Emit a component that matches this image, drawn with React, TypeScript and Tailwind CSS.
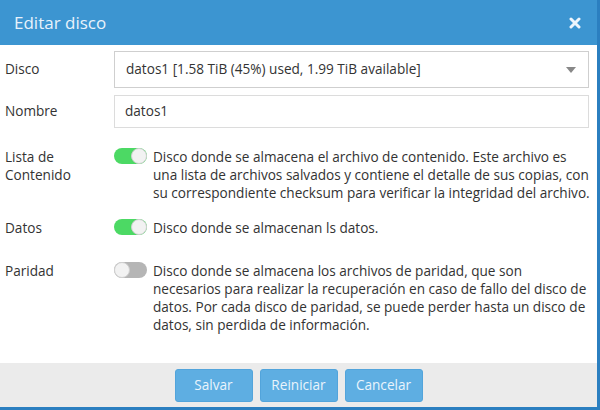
import React from "react";

function Toggle({ on }: { on: boolean }) {
  return (
    <div
      className={
        on
          ? "relative w-[33px] h-[16px] rounded-full bg-[#4cd964] shrink-0"
          : "relative w-[33px] h-[16px] rounded-full bg-[#b5b5b5] shrink-0"
      }
    >
      <div
        className={
          on
            ? "absolute top-0 right-0 w-[16px] h-[16px] rounded-full bg-[#f2f2f2] border border-[#d0d0d0]"
            : "absolute top-0 left-0 w-[16px] h-[16px] rounded-full bg-[#f2f2f2] border border-[#d0d0d0]"
        }
      />
    </div>
  );
}

function ToggleRow({
  label,
  on,
  text,
}: {
  label: React.ReactNode;
  on: boolean;
  text: React.ReactNode;
}) {
  return (
    <div className="flex items-start">
      <div className="w-[114px] pl-[5px] leading-[18px] text-[13.6px] text-[#333]">
        {label}
      </div>
      <div className="pt-[0px]">
        <Toggle on={on} />
      </div>
      <div className="ml-[6px] flex-1 leading-[18px] text-[13.6px] text-[#333] pr-[5px]">
        {text}
      </div>
    </div>
  );
}

export default function App() {
  return (
    <div
      className="w-[600px] h-[410px] flex flex-col bg-white border-r-[3px] border-b-[3px] border-[#2b7fc0] overflow-hidden"
      style={{ fontFamily: '"Open Sans", "Noto Sans", sans-serif' }}
    >
      <div className="h-[45px] shrink-0 bg-[#3c95d1] flex items-center justify-between pl-[14px] pr-[16px]">
        <span className="text-[17px] text-[#e8f2fb]">Editar disco</span>
        <svg width="12" height="12" viewBox="0 0 12 12">
          <path
            d="M2 2 L10 10 M10 2 L2 10"
            stroke="#eef5fc"
            strokeWidth="3"
            strokeLinecap="round"
          />
        </svg>
      </div>

      <div className="flex-1 flex flex-col pt-[6px]">
        <div className="flex items-center">
          <div className="w-[114px] pl-[5px] text-[13.6px] text-[#333]">Disco</div>
          <div className="flex-1 mr-[8px] h-[37px] border border-[#cfcfcf] flex items-center justify-between pl-[11px] pr-[12px] text-[13.6px] text-[#333]">
            <span>datos1 [1.58 TiB (45%) used, 1.99 TiB available]</span>
            <svg width="10" height="6" viewBox="0 0 10 6">
              <path d="M0 0 L10 0 L5 6 Z" fill="#888" />
            </svg>
          </div>
        </div>

        <div className="flex items-center mt-[7px]">
          <div className="w-[114px] pl-[5px] text-[13.6px] text-[#333]">Nombre</div>
          <div className="flex-1 mr-[8px] h-[33px] border border-[#dcdcdc] flex items-center pl-[10px] text-[13.6px] text-[#333]">
            datos1
          </div>
        </div>

        <div className="mt-[20px]">
          <ToggleRow
            label={
              <>
                Lista de
                <br />
                Contenido
              </>
            }
            on={true}
            text="Disco donde se almacena el archivo de contenido. Este archivo es una lista de archivos salvados y contiene el detalle de sus copias, con su correspondiente checksum para verificar la integridad del archivo."
          />
        </div>

        <div className="mt-[17px]">
          <ToggleRow label="Datos" on={true} text="Disco donde se almacenan ls datos." />
        </div>

        <div className="mt-[25px]">
          <ToggleRow
            label="Paridad"
            on={false}
            text="Disco donde se almacena los archivos de paridad, que son necesarios para realizar la recuperación en caso de fallo del disco de datos. Por cada disco de paridad, se puede perder hasta un disco de datos, sin perdida de información."
          />
        </div>
      </div>

      <div className="h-[44px] shrink-0 bg-[#ebebeb] flex items-center justify-center gap-[7px]">
        <button className="w-[78px] h-[33px] rounded-[3px] bg-[#5eaee2] border border-[#52a4db] text-[13.6px] text-[#eaf4fc]">
          Salvar
        </button>
        <button className="w-[78px] h-[33px] rounded-[3px] bg-[#5eaee2] border border-[#52a4db] text-[13.6px] text-[#eaf4fc]">
          Reiniciar
        </button>
        <button className="w-[78px] h-[33px] rounded-[3px] bg-[#5eaee2] border border-[#52a4db] text-[13.6px] text-[#eaf4fc]">
          Cancelar
        </button>
      </div>
    </div>
  );
}
